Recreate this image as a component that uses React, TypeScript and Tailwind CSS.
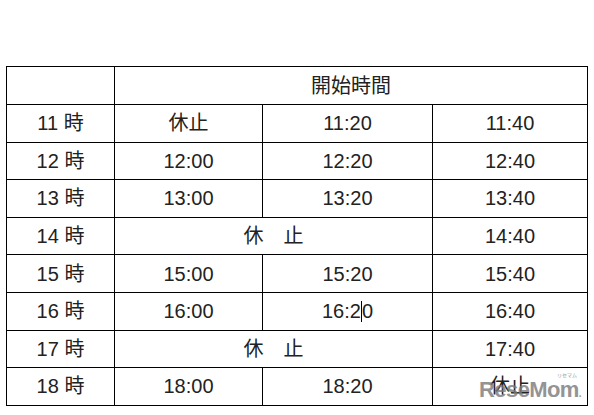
const rows: { hour: string; cells: (string | null)[]; stop?: boolean }[] = [
  { hour: "11", cells: ["休止", "11:20", "11:40"] },
  { hour: "12", cells: ["12:00", "12:20", "12:40"] },
  { hour: "13", cells: ["13:00", "13:20", "13:40"] },
  { hour: "14", cells: [null, "14:40"], stop: true },
  { hour: "15", cells: ["15:00", "15:20", "15:40"] },
  { hour: "16", cells: ["16:00", "16:2|0", "16:40"] },
  { hour: "17", cells: [null, "17:40"], stop: true },
  { hour: "18", cells: ["18:00", "18:20", "休止"] },
];

const cell = "border border-black text-center align-middle p-0";

const Time = ({ value }: { value: string }) => {
  if (value.includes("|")) {
    const [a, b] = value.split("|");
    return (
      <span>
        {a}
        <span className="inline-block w-px h-[21px] bg-black align-[-4px]" />
        {b}
      </span>
    );
  }
  return <span>{value}</span>;
};

// リセマム watermark over the last cell
const Watermark = () => (
  <div className="absolute right-[6px] bottom-[4px] pointer-events-none select-none opacity-80">
    <div className="relative font-['Liberation_Sans',sans-serif] font-bold text-[22px] leading-none tracking-[-0.6px] text-[#7a7a7a]">
      ReseMom<span className="text-[10px]">.</span>
      <span className="absolute right-[4px] -top-[7px] text-[5px] font-normal tracking-normal font-['Noto_Sans_CJK_JP',sans-serif]">
        リセマム
      </span>
    </div>
  </div>
);

export default function App() {
  return (
    <div className="w-[594px] h-[415px] bg-white pt-[66px] pl-[6px] font-['Liberation_Sans','Noto_Sans_CJK_JP',sans-serif] text-[20px] text-[#222]">
      <table className="table-fixed border-collapse w-[581px]">
        <colgroup>
          <col className="w-[108px]" />
          <col className="w-[148px]" />
          <col className="w-[170px]" />
          <col className="w-[155px]" />
        </colgroup>
        <tbody>
          <tr className="h-[38px]">
            <td className={cell}></td>
            <td className={cell} colSpan={3}>
              開始時間
            </td>
          </tr>
          {rows.map((r, i) => (
            <tr key={r.hour} className="h-[37.6px]">
              <td className={cell}>{r.hour} 時</td>
              {r.stop ? (
                <>
                  <td className={cell} colSpan={2}>
                    休　止
                  </td>
                  <td className={cell}>
                    <Time value={r.cells[1] as string} />
                  </td>
                </>
              ) : (
                r.cells.map((c, j) => (
                  <td
                    key={j}
                    className={`${cell} ${i === rows.length - 1 && j === 2 ? "relative" : ""}`}
                  >
                    <Time value={c as string} />
                    {i === rows.length - 1 && j === 2 && <Watermark />}
                  </td>
                ))
              )}
            </tr>
          ))}
        </tbody>
      </table>
    </div>
  );
}
